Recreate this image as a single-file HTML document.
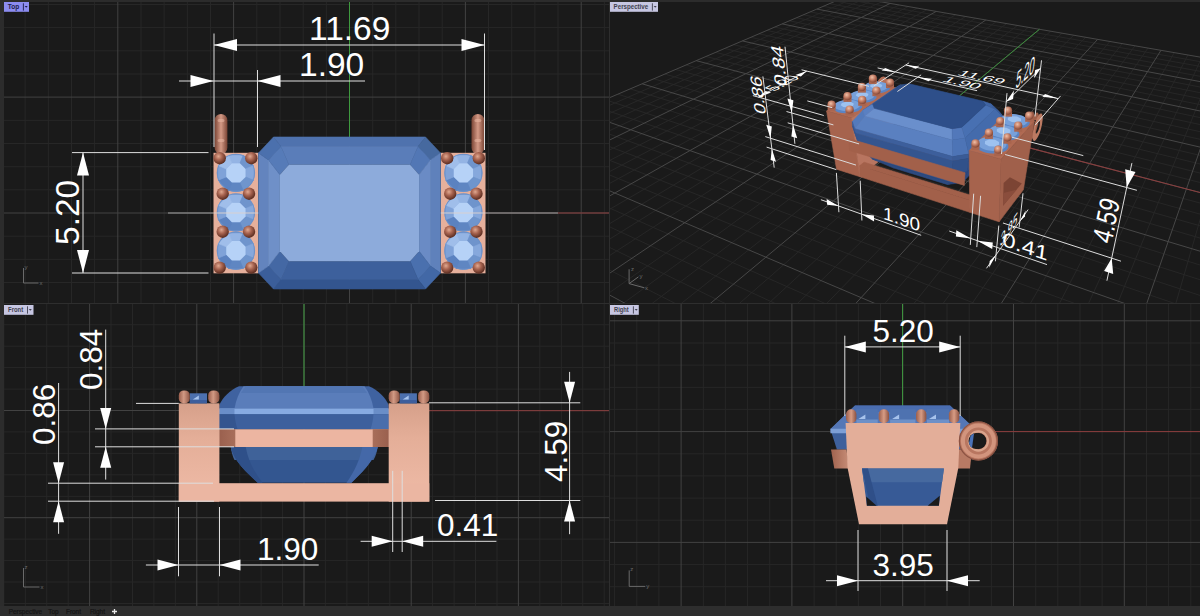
<!DOCTYPE html>
<html><head><meta charset="utf-8"><style>html,body{margin:0;padding:0;background:#2c2c2c;overflow:hidden;width:1200px;height:616px}svg{display:block}</style></head>
<body><svg width="1200" height="616" viewBox="0 0 1200 616"><defs><clipPath id="c_top"><rect x="4" y="2" width="605" height="301"/></clipPath><clipPath id="c_persp"><rect x="610" y="2" width="590" height="301"/></clipPath><clipPath id="c_front"><rect x="4" y="304" width="605" height="302"/></clipPath><clipPath id="c_right"><rect x="610" y="304" width="590" height="302"/></clipPath></defs>
<rect x="0" y="0" width="1200" height="616" fill="#2c2c2c"/>
<rect x="4" y="2" width="605" height="301" fill="#1a1a1a"/>
<rect x="610" y="2" width="590" height="301" fill="#1a1a1a"/>
<rect x="4" y="304" width="605" height="302" fill="#1a1a1a"/>
<rect x="610" y="304" width="590" height="302" fill="#1a1a1a"/>
<g clip-path="url(#c_top)"><path d="M25.1 2V303M48.3 2V303M71.5 2V303M94.6 2V303M141 2V303M4 4.5H609M164.1 2V303M4 27.6H609M187.3 2V303M4 50.8H609M210.5 2V303M4 74H609M256.8 2V303M4 120.3H609M280 2V303M4 143.5H609M303.2 2V303M4 166.7H609M326.3 2V303M4 189.8H609M372.7 2V303M4 236.2H609M395.8 2V303M4 259.3H609M419 2V303M4 282.5H609M442.2 2V303M488.5 2V303M511.7 2V303M534.9 2V303M558 2V303M604.4 2V303" stroke="#272727" stroke-width="1" fill="none"/><path d="M117.8 2V303M233.6 2V303M4 97.1H609M349.5 2V303M4 213H609M465.4 2V303M581.2 2V303" stroke="#424242" stroke-width="1" fill="none"/></g>
<g clip-path="url(#c_front)"><path d="M3.8 304V606M25.3 304V606M46.7 304V606M68.2 304V606M111 304V606M132.5 304V606M153.9 304V606M175.4 304V606M218.2 304V606M4 324.7H609M239.7 304V606M4 346.2H609M261.1 304V606M4 367.6H609M282.6 304V606M4 389.1H609M325.4 304V606M4 431.9H609M346.9 304V606M4 453.4H609M368.3 304V606M4 474.8H609M389.8 304V606M4 496.3H609M432.6 304V606M4 539.1H609M454.1 304V606M4 560.6H609M475.5 304V606M4 582H609M497 304V606M4 603.5H609M539.8 304V606M561.3 304V606M582.7 304V606M604.2 304V606" stroke="#272727" stroke-width="1" fill="none"/><path d="M89.6 304V606M196.8 304V606M4 303.3H609M304 304V606M4 410.5H609M411.2 304V606M4 517.7H609M518.4 304V606" stroke="#424242" stroke-width="1" fill="none"/></g>
<g clip-path="url(#c_right)"><path d="M614.6 304V606M636.8 304V606M658.9 304V606M703.3 304V606M725.4 304V606M747.6 304V606M769.7 304V606M814.1 304V606M610 343H1200M836.2 304V606M610 365.1H1200M858.4 304V606M610 387.3H1200M880.5 304V606M610 409.4H1200M924.9 304V606M610 453.8H1200M947 304V606M610 475.9H1200M969.2 304V606M610 498.1H1200M991.3 304V606M610 520.2H1200M1035.7 304V606M610 564.6H1200M1057.8 304V606M610 586.7H1200M1080 304V606M1102.1 304V606M1146.5 304V606M1168.6 304V606M1190.8 304V606" stroke="#272727" stroke-width="1" fill="none"/><path d="M681.1 304V606M791.9 304V606M610 320.8H1200M902.7 304V606M610 431.6H1200M1013.5 304V606M610 542.4H1200M1124.3 304V606" stroke="#424242" stroke-width="1" fill="none"/></g>
<g clip-path="url(#c_persp)"><path d="M414.8 190.7L855.7 -2.5M425.6 176.4L1273.3 607.9M425.1 196.3L864.1 -1.1M445.5 167.9L1275.7 570.4M435.7 202L872.7 0.4M464.6 159.7L1277.8 536.2M446.7 207.8L881.4 1.9M482.8 151.9L1279.7 504.9M469.5 220.1L899.1 5M517.1 137.3L1283.1 449.5M481.5 226.5L908.2 6.6M533.3 130.4L1284.7 424.9M493.8 233.1L917.4 8.1M548.7 123.7L1286.1 402.1M506.5 239.9L926.7 9.8M563.6 117.4L1287.4 380.9M533 254.1L945.8 13.1M591.8 105.3L1289.8 342.6M547 261.5L955.5 14.8M605.1 99.7L1290.8 325.3M561.4 269.3L965.5 16.5M617.9 94.2L1291.8 309M576.2 277.2L975.5 18.2M630.3 88.9L1292.8 293.7M607.5 294L996.1 21.8M653.8 78.8L1294.5 265.6M624 302.8L1006.7 23.6M664.9 74.1L1295.3 252.8M641 311.9L1017.4 25.5M675.7 69.5L1296.1 240.6M658.7 321.4L1028.3 27.4M686.2 65L1296.8 229M696 341.4L1050.7 31.2M706.1 56.5L1298.1 207.5M715.8 352L1062.1 33.2M715.6 52.4L1298.7 197.6M736.3 363L1073.7 35.2M724.8 48.5L1299.3 188.1M757.7 374.4L1085.6 37.3M733.7 44.7L1299.9 179.1M803.1 398.7L1109.9 41.5M750.8 37.3L1300.9 162.2M827.2 411.6L1122.3 43.6M759 33.8L1301.4 154.2M852.4 425.1L1135 45.8M766.9 30.4L1301.9 146.7M878.7 439.2L1147.9 48.1M774.7 27.1L1302.3 139.4M935.1 469.4L1174.3 52.6M789.5 20.8L1303.2 125.7M965.2 485.6L1187.9 55M796.6 17.8L1303.6 119.3M996.9 502.5L1201.8 57.4M803.5 14.8L1304 113.1M1030.1 520.3L1215.9 59.8M810.3 11.9L1304.3 107.1M1101.9 558.8L1244.9 64.9M823.3 6.3L1305 95.8M1140.7 579.5L1259.8 67.4M829.5 3.7L1305.4 90.5M1181.6 601.5L1275 70.1M835.6 1.1L1305.7 85.3M1224.9 624.7L1290.5 72.8M841.6 -1.5L1306 80.3" stroke="#282828" stroke-width="0.9" fill="none"/><path d="M404.7 185.3L847.4 -4M404.7 185.3L1270.8 649.2M457.9 213.9L890.2 3.4M500.3 144.4L1281.5 476.1M519.5 246.9L936.2 11.4M578 111.2L1288.6 361.1M591.6 285.4L985.8 20M642.2 83.8L1293.7 279.3M677 331.2L1039.4 29.3M696.3 60.7L1297.5 218M779.9 386.3L1097.6 39.4M742.4 40.9L1300.4 170.4M906.3 454L1161 50.3M782.2 23.9L1302.8 132.4M1065.1 539.1L1230.3 62.3M816.9 9.1L1304.7 101.4M1270.8 649.2L1306.3 75.5M847.4 -4L1306.3 75.5" stroke="#474747" stroke-width="1" fill="none"/></g>
<defs><radialGradient id="prong" cx="0.4" cy="0.35" r="0.65"><stop offset="0" stop-color="#e0a890"/><stop offset="0.45" stop-color="#a86450"/><stop offset="1" stop-color="#5a2c20"/></radialGradient><radialGradient id="prongP" cx="0.4" cy="0.35" r="0.7"><stop offset="0" stop-color="#f0c0a8"/><stop offset="0.5" stop-color="#c27c64"/><stop offset="1" stop-color="#7a4030"/></radialGradient><linearGradient id="loopv" x1="0" y1="0" x2="1" y2="0"><stop offset="0" stop-color="#7a4434"/><stop offset="0.5" stop-color="#d49a86"/><stop offset="1" stop-color="#7a4434"/></linearGradient></defs>
<g clip-path="url(#c_top)">
<line x1="349.5" y1="2" x2="349.5" y2="140" stroke="#3f9a3f" stroke-width="1"/>
<line x1="485" y1="213" x2="558" y2="213" stroke="#aaa2a2" stroke-width="1"/>
<line x1="558" y1="213" x2="609" y2="213" stroke="#8a3c3c" stroke-width="1"/>
<line x1="168" y1="213" x2="214" y2="213" stroke="#a0a0a0" stroke-width="1"/>
<rect x="214.6" y="114" width="12.8" height="40" rx="6.4" ry="6.4" fill="url(#loopv)"/>
<rect x="217.6" y="119" width="6.8" height="3" rx="1.5" fill="#e6b4a0" opacity="0.6"/>
<rect x="217.6" y="139" width="6.8" height="3" rx="1.5" fill="#e6b4a0" opacity="0.6"/>
<rect x="471.5" y="114" width="12.8" height="40" rx="6.4" ry="6.4" fill="url(#loopv)"/>
<rect x="474.5" y="119" width="6.8" height="3" rx="1.5" fill="#e6b4a0" opacity="0.6"/>
<rect x="474.5" y="139" width="6.8" height="3" rx="1.5" fill="#e6b4a0" opacity="0.6"/>
<rect x="213.5" y="152.8" width="44.5" height="120.5" fill="#e6b09c"/>
<circle cx="235.9" cy="172.9" r="19" fill="#6f95cd"/>
<polygon points="228.6,155.3 243.2,155.3 239.9,163.2 231.9,163.2" fill="#94b4e4" stroke="#94b4e4" stroke-width="0.6" stroke-linejoin="round" />
<polygon points="243.2,155.3 253.5,165.6 245.6,168.9 239.9,163.2" fill="#6f94cc" stroke="#6f94cc" stroke-width="0.6" stroke-linejoin="round" />
<polygon points="253.5,165.6 253.5,180.2 245.6,176.9 245.6,168.9" fill="#86a8dc" stroke="#86a8dc" stroke-width="0.6" stroke-linejoin="round" />
<polygon points="253.5,180.2 243.2,190.5 239.9,182.6 245.6,176.9" fill="#6f95cd" stroke="#6f95cd" stroke-width="0.6" stroke-linejoin="round" />
<polygon points="243.2,190.5 228.6,190.5 231.9,182.6 239.9,182.6" fill="#5f86c2" stroke="#5f86c2" stroke-width="0.6" stroke-linejoin="round" />
<polygon points="228.6,190.5 218.3,180.2 226.2,176.9 231.9,182.6" fill="#5b82c0" stroke="#5b82c0" stroke-width="0.6" stroke-linejoin="round" />
<polygon points="218.3,180.2 218.3,165.6 226.2,168.9 226.2,176.9" fill="#7fa2d8" stroke="#7fa2d8" stroke-width="0.6" stroke-linejoin="round" />
<polygon points="218.3,165.6 228.6,155.3 231.9,163.2 226.2,168.9" fill="#a0beea" stroke="#a0beea" stroke-width="0.6" stroke-linejoin="round" />
<circle cx="235.9" cy="172.9" r="18.7" fill="none" stroke="#6a8fc8" stroke-width="0.8"/>
<polygon points="245.6,176.9 239.9,182.6 231.9,182.6 226.2,176.9 226.2,168.9 231.9,163.2 239.9,163.2 245.6,168.9" fill="#b6d2f7" />
<circle cx="235.9" cy="212.5" r="19" fill="#6f95cd"/>
<polygon points="228.6,194.9 243.2,194.9 239.9,202.8 231.9,202.8" fill="#94b4e4" stroke="#94b4e4" stroke-width="0.6" stroke-linejoin="round" />
<polygon points="243.2,194.9 253.5,205.2 245.6,208.5 239.9,202.8" fill="#6f94cc" stroke="#6f94cc" stroke-width="0.6" stroke-linejoin="round" />
<polygon points="253.5,205.2 253.5,219.8 245.6,216.5 245.6,208.5" fill="#86a8dc" stroke="#86a8dc" stroke-width="0.6" stroke-linejoin="round" />
<polygon points="253.5,219.8 243.2,230.1 239.9,222.2 245.6,216.5" fill="#6f95cd" stroke="#6f95cd" stroke-width="0.6" stroke-linejoin="round" />
<polygon points="243.2,230.1 228.6,230.1 231.9,222.2 239.9,222.2" fill="#5f86c2" stroke="#5f86c2" stroke-width="0.6" stroke-linejoin="round" />
<polygon points="228.6,230.1 218.3,219.8 226.2,216.5 231.9,222.2" fill="#5b82c0" stroke="#5b82c0" stroke-width="0.6" stroke-linejoin="round" />
<polygon points="218.3,219.8 218.3,205.2 226.2,208.5 226.2,216.5" fill="#7fa2d8" stroke="#7fa2d8" stroke-width="0.6" stroke-linejoin="round" />
<polygon points="218.3,205.2 228.6,194.9 231.9,202.8 226.2,208.5" fill="#a0beea" stroke="#a0beea" stroke-width="0.6" stroke-linejoin="round" />
<circle cx="235.9" cy="212.5" r="18.7" fill="none" stroke="#6a8fc8" stroke-width="0.8"/>
<polygon points="245.6,216.5 239.9,222.2 231.9,222.2 226.2,216.5 226.2,208.5 231.9,202.8 239.9,202.8 245.6,208.5" fill="#b6d2f7" />
<circle cx="235.9" cy="250.8" r="19" fill="#6f95cd"/>
<polygon points="228.6,233.2 243.2,233.2 239.9,241.1 231.9,241.1" fill="#94b4e4" stroke="#94b4e4" stroke-width="0.6" stroke-linejoin="round" />
<polygon points="243.2,233.2 253.5,243.5 245.6,246.8 239.9,241.1" fill="#6f94cc" stroke="#6f94cc" stroke-width="0.6" stroke-linejoin="round" />
<polygon points="253.5,243.5 253.5,258.1 245.6,254.8 245.6,246.8" fill="#86a8dc" stroke="#86a8dc" stroke-width="0.6" stroke-linejoin="round" />
<polygon points="253.5,258.1 243.2,268.4 239.9,260.5 245.6,254.8" fill="#6f95cd" stroke="#6f95cd" stroke-width="0.6" stroke-linejoin="round" />
<polygon points="243.2,268.4 228.6,268.4 231.9,260.5 239.9,260.5" fill="#5f86c2" stroke="#5f86c2" stroke-width="0.6" stroke-linejoin="round" />
<polygon points="228.6,268.4 218.3,258.1 226.2,254.8 231.9,260.5" fill="#5b82c0" stroke="#5b82c0" stroke-width="0.6" stroke-linejoin="round" />
<polygon points="218.3,258.1 218.3,243.5 226.2,246.8 226.2,254.8" fill="#7fa2d8" stroke="#7fa2d8" stroke-width="0.6" stroke-linejoin="round" />
<polygon points="218.3,243.5 228.6,233.2 231.9,241.1 226.2,246.8" fill="#a0beea" stroke="#a0beea" stroke-width="0.6" stroke-linejoin="round" />
<circle cx="235.9" cy="250.8" r="18.7" fill="none" stroke="#6a8fc8" stroke-width="0.8"/>
<polygon points="245.6,254.8 239.9,260.5 231.9,260.5 226.2,254.8 226.2,246.8 231.9,241.1 239.9,241.1 245.6,246.8" fill="#b6d2f7" />
<circle cx="219.7" cy="158.2" r="6.2" fill="url(#prong)"/>
<circle cx="251.3" cy="158.2" r="6.2" fill="url(#prong)"/>
<circle cx="219.7" cy="267.6" r="6.2" fill="url(#prong)"/>
<circle cx="251.3" cy="267.6" r="6.2" fill="url(#prong)"/>
<circle cx="222.7" cy="193.7" r="6.2" fill="url(#prong)"/>
<circle cx="249" cy="193.7" r="6.2" fill="url(#prong)"/>
<circle cx="222.7" cy="231.7" r="6.2" fill="url(#prong)"/>
<circle cx="249" cy="231.7" r="6.2" fill="url(#prong)"/>
<rect x="441" y="152.8" width="44.5" height="120.5" fill="#e6b09c"/>
<circle cx="463.4" cy="172.9" r="19" fill="#6f95cd"/>
<polygon points="456.1,155.3 470.7,155.3 467.4,163.2 459.4,163.2" fill="#94b4e4" stroke="#94b4e4" stroke-width="0.6" stroke-linejoin="round" />
<polygon points="470.7,155.3 481,165.6 473.1,168.9 467.4,163.2" fill="#6f94cc" stroke="#6f94cc" stroke-width="0.6" stroke-linejoin="round" />
<polygon points="481,165.6 481,180.2 473.1,176.9 473.1,168.9" fill="#86a8dc" stroke="#86a8dc" stroke-width="0.6" stroke-linejoin="round" />
<polygon points="481,180.2 470.7,190.5 467.4,182.6 473.1,176.9" fill="#6f95cd" stroke="#6f95cd" stroke-width="0.6" stroke-linejoin="round" />
<polygon points="470.7,190.5 456.1,190.5 459.4,182.6 467.4,182.6" fill="#5f86c2" stroke="#5f86c2" stroke-width="0.6" stroke-linejoin="round" />
<polygon points="456.1,190.5 445.8,180.2 453.7,176.9 459.4,182.6" fill="#5b82c0" stroke="#5b82c0" stroke-width="0.6" stroke-linejoin="round" />
<polygon points="445.8,180.2 445.8,165.6 453.7,168.9 453.7,176.9" fill="#7fa2d8" stroke="#7fa2d8" stroke-width="0.6" stroke-linejoin="round" />
<polygon points="445.8,165.6 456.1,155.3 459.4,163.2 453.7,168.9" fill="#a0beea" stroke="#a0beea" stroke-width="0.6" stroke-linejoin="round" />
<circle cx="463.4" cy="172.9" r="18.7" fill="none" stroke="#6a8fc8" stroke-width="0.8"/>
<polygon points="473.1,176.9 467.4,182.6 459.4,182.6 453.7,176.9 453.7,168.9 459.4,163.2 467.4,163.2 473.1,168.9" fill="#b6d2f7" />
<circle cx="463.4" cy="212.5" r="19" fill="#6f95cd"/>
<polygon points="456.1,194.9 470.7,194.9 467.4,202.8 459.4,202.8" fill="#94b4e4" stroke="#94b4e4" stroke-width="0.6" stroke-linejoin="round" />
<polygon points="470.7,194.9 481,205.2 473.1,208.5 467.4,202.8" fill="#6f94cc" stroke="#6f94cc" stroke-width="0.6" stroke-linejoin="round" />
<polygon points="481,205.2 481,219.8 473.1,216.5 473.1,208.5" fill="#86a8dc" stroke="#86a8dc" stroke-width="0.6" stroke-linejoin="round" />
<polygon points="481,219.8 470.7,230.1 467.4,222.2 473.1,216.5" fill="#6f95cd" stroke="#6f95cd" stroke-width="0.6" stroke-linejoin="round" />
<polygon points="470.7,230.1 456.1,230.1 459.4,222.2 467.4,222.2" fill="#5f86c2" stroke="#5f86c2" stroke-width="0.6" stroke-linejoin="round" />
<polygon points="456.1,230.1 445.8,219.8 453.7,216.5 459.4,222.2" fill="#5b82c0" stroke="#5b82c0" stroke-width="0.6" stroke-linejoin="round" />
<polygon points="445.8,219.8 445.8,205.2 453.7,208.5 453.7,216.5" fill="#7fa2d8" stroke="#7fa2d8" stroke-width="0.6" stroke-linejoin="round" />
<polygon points="445.8,205.2 456.1,194.9 459.4,202.8 453.7,208.5" fill="#a0beea" stroke="#a0beea" stroke-width="0.6" stroke-linejoin="round" />
<circle cx="463.4" cy="212.5" r="18.7" fill="none" stroke="#6a8fc8" stroke-width="0.8"/>
<polygon points="473.1,216.5 467.4,222.2 459.4,222.2 453.7,216.5 453.7,208.5 459.4,202.8 467.4,202.8 473.1,208.5" fill="#b6d2f7" />
<circle cx="463.4" cy="250.8" r="19" fill="#6f95cd"/>
<polygon points="456.1,233.2 470.7,233.2 467.4,241.1 459.4,241.1" fill="#94b4e4" stroke="#94b4e4" stroke-width="0.6" stroke-linejoin="round" />
<polygon points="470.7,233.2 481,243.5 473.1,246.8 467.4,241.1" fill="#6f94cc" stroke="#6f94cc" stroke-width="0.6" stroke-linejoin="round" />
<polygon points="481,243.5 481,258.1 473.1,254.8 473.1,246.8" fill="#86a8dc" stroke="#86a8dc" stroke-width="0.6" stroke-linejoin="round" />
<polygon points="481,258.1 470.7,268.4 467.4,260.5 473.1,254.8" fill="#6f95cd" stroke="#6f95cd" stroke-width="0.6" stroke-linejoin="round" />
<polygon points="470.7,268.4 456.1,268.4 459.4,260.5 467.4,260.5" fill="#5f86c2" stroke="#5f86c2" stroke-width="0.6" stroke-linejoin="round" />
<polygon points="456.1,268.4 445.8,258.1 453.7,254.8 459.4,260.5" fill="#5b82c0" stroke="#5b82c0" stroke-width="0.6" stroke-linejoin="round" />
<polygon points="445.8,258.1 445.8,243.5 453.7,246.8 453.7,254.8" fill="#7fa2d8" stroke="#7fa2d8" stroke-width="0.6" stroke-linejoin="round" />
<polygon points="445.8,243.5 456.1,233.2 459.4,241.1 453.7,246.8" fill="#a0beea" stroke="#a0beea" stroke-width="0.6" stroke-linejoin="round" />
<circle cx="463.4" cy="250.8" r="18.7" fill="none" stroke="#6a8fc8" stroke-width="0.8"/>
<polygon points="473.1,254.8 467.4,260.5 459.4,260.5 453.7,254.8 453.7,246.8 459.4,241.1 467.4,241.1 473.1,246.8" fill="#b6d2f7" />
<circle cx="447.2" cy="158.2" r="6.2" fill="url(#prong)"/>
<circle cx="478.8" cy="158.2" r="6.2" fill="url(#prong)"/>
<circle cx="447.2" cy="267.6" r="6.2" fill="url(#prong)"/>
<circle cx="478.8" cy="267.6" r="6.2" fill="url(#prong)"/>
<circle cx="450.2" cy="193.7" r="6.2" fill="url(#prong)"/>
<circle cx="476.5" cy="193.7" r="6.2" fill="url(#prong)"/>
<circle cx="450.2" cy="231.7" r="6.2" fill="url(#prong)"/>
<circle cx="476.5" cy="231.7" r="6.2" fill="url(#prong)"/>
<line x1="214" y1="213" x2="258.5" y2="213" stroke="#d8d0d0" stroke-width="1"/>
<line x1="440.5" y1="213" x2="485" y2="213" stroke="#d8d0d0" stroke-width="1"/>
<polygon points="273.5,137 425.5,137 418,146.5 281,146.5" fill="#4f72ae" stroke="#4f72ae" stroke-width="0.6" stroke-linejoin="round" />
<polygon points="281,146.5 418,146.5 410.1,164.8 288.9,164.8" fill="#5a7db9" stroke="#5a7db9" stroke-width="0.6" stroke-linejoin="round" />
<polygon points="425.5,137 440.5,153 430.5,160 418,146.5" fill="#46699f" stroke="#46699f" stroke-width="0.6" stroke-linejoin="round" />
<polygon points="418,146.5 430.5,160 419.1,174.8 410.1,164.8" fill="#5277b5" stroke="#5277b5" stroke-width="0.6" stroke-linejoin="round" />
<polygon points="440.5,153 440.5,273 430.5,266 430.5,160" fill="#5f81bb" stroke="#5f81bb" stroke-width="0.6" stroke-linejoin="round" />
<polygon points="430.5,160 430.5,266 419.1,251.2 419.1,174.8" fill="#6a8bc5" stroke="#6a8bc5" stroke-width="0.6" stroke-linejoin="round" />
<polygon points="440.5,273 425.5,289 418,279.5 430.5,266" fill="#4268a6" stroke="#4268a6" stroke-width="0.6" stroke-linejoin="round" />
<polygon points="430.5,266 418,279.5 410.1,261.2 419.1,251.2" fill="#4a70ae" stroke="#4a70ae" stroke-width="0.6" stroke-linejoin="round" />
<polygon points="425.5,289 273.5,289 281,279.5 418,279.5" fill="#33558f" stroke="#33558f" stroke-width="0.6" stroke-linejoin="round" />
<polygon points="418,279.5 281,279.5 288.9,261.2 410.1,261.2" fill="#3d609c" stroke="#3d609c" stroke-width="0.6" stroke-linejoin="round" />
<polygon points="273.5,289 258.5,273 268.5,266 281,279.5" fill="#3b5e9a" stroke="#3b5e9a" stroke-width="0.6" stroke-linejoin="round" />
<polygon points="281,279.5 268.5,266 279.9,251.2 288.9,261.2" fill="#4468a4" stroke="#4468a4" stroke-width="0.6" stroke-linejoin="round" />
<polygon points="258.5,273 258.5,153 268.5,160 268.5,266" fill="#6384be" stroke="#6384be" stroke-width="0.6" stroke-linejoin="round" />
<polygon points="268.5,266 268.5,160 279.9,174.8 279.9,251.2" fill="#6f90c8" stroke="#6f90c8" stroke-width="0.6" stroke-linejoin="round" />
<polygon points="258.5,153 273.5,137 281,146.5 268.5,160" fill="#4b70ad" stroke="#4b70ad" stroke-width="0.6" stroke-linejoin="round" />
<polygon points="268.5,160 281,146.5 288.9,164.8 279.9,174.8" fill="#567bb8" stroke="#567bb8" stroke-width="0.6" stroke-linejoin="round" />
<polygon points="288.9,164.8 410.1,164.8 419.1,174.8 419.1,251.2 410.1,261.2 288.9,261.2 279.9,251.2 279.9,174.8" fill="#8dabdb" />
</g>
<line x1="214" y1="33.5" x2="214" y2="147" stroke="#dedede" stroke-width="1"/>
<line x1="484.5" y1="33.5" x2="484.5" y2="150" stroke="#dedede" stroke-width="1"/>
<line x1="214" y1="45" x2="484.5" y2="45" stroke="#e0e0e0" stroke-width="1"/>
<polygon points="214,45 237,39 237,51" fill="#ffffff" />
<polygon points="484.5,45 461.5,51 461.5,39" fill="#ffffff" />
<text x="309" y="39.5" font-family="Liberation Sans" font-size="33.5" fill="#ffffff" text-anchor="start">11.69</text>
<line x1="257.5" y1="70" x2="257.5" y2="147" stroke="#dedede" stroke-width="1"/>
<line x1="179" y1="81" x2="365" y2="81" stroke="#e0e0e0" stroke-width="1"/>
<polygon points="213.5,81 190.5,87 190.5,75" fill="#ffffff" />
<polygon points="257.5,81 280.5,75 280.5,87" fill="#ffffff" />
<text x="299" y="76.3" font-family="Liberation Sans" font-size="33.5" fill="#ffffff" text-anchor="start">1.90</text>
<line x1="72" y1="152.6" x2="208.5" y2="152.6" stroke="#dedede" stroke-width="1"/>
<line x1="72" y1="273" x2="208.5" y2="273" stroke="#dedede" stroke-width="1"/>
<line x1="83" y1="152.6" x2="83" y2="273" stroke="#e0e0e0" stroke-width="1"/>
<polygon points="83,152.6 89,175.6 77,175.6" fill="#ffffff" />
<polygon points="83,273 77,250 89,250" fill="#ffffff" />
<text x="78.5" y="245" font-family="Liberation Sans" font-size="33.5" fill="#ffffff" text-anchor="start" transform="rotate(-90 78.5 245)">5.20</text>
<defs><linearGradient id="pillar" x1="0" y1="0" x2="0" y2="1"><stop offset="0" stop-color="#d6a08a"/><stop offset="0.35" stop-color="#e4ae98"/><stop offset="1" stop-color="#efbba7"/></linearGradient><linearGradient id="cyl" x1="0" y1="0" x2="1" y2="0"><stop offset="0" stop-color="#9a5e4c"/><stop offset="0.45" stop-color="#d29a84"/><stop offset="1" stop-color="#8c5444"/></linearGradient><linearGradient id="bandend" x1="0" y1="0" x2="1" y2="0"><stop offset="0" stop-color="#9a604e"/><stop offset="1" stop-color="#a86e5a"/></linearGradient></defs>
<g clip-path="url(#c_front)">
<line x1="304" y1="304" x2="304" y2="390" stroke="#3f9a3f" stroke-width="1"/>
<line x1="429" y1="410.7" x2="609" y2="410.7" stroke="#8a3c3c" stroke-width="1"/>
<path d="M239 386.2L369 386.2C378 390 386 398 388.7 405L388.7 429.2L219.3 429.2L219.3 405C222 398 230 390 239 386.2Z" fill="#3f62a0"/>
<path d="M243.5 386.2L364.5 386.2C369 392 372 400 373.5 408.6L234.5 408.6C236 400 239 392 243.5 386.2Z" fill="#5a7dba"/>
<path d="M246 386.2L362 386.2C364 388.5 365.5 390.5 367 393L241 393C242.5 390.5 244 388.5 246 386.2Z" fill="#5276b3"/>
<polygon points="219.3,408.6 388.7,408.6 388.7,414.2 219.3,414.2" fill="#87abe2" />
<polygon points="219.3,408.6 234.5,408.6 234.5,414.2 219.3,414.2" fill="#6a8ec8" />
<polygon points="388.7,408.6 373.5,408.6 373.5,414.2 388.7,414.2" fill="#6a8ec8" />
<polygon points="219.3,414.2 388.7,414.2 388.7,429.2 219.3,429.2" fill="#3d609d" />
<path d="M219.3 414.2L234.5 414.2C235 420 236 425 237.5 429.2L219.3 429.2Z" fill="#34558f"/>
<path d="M388.7 414.2L373.5 414.2C373 420 372 425 370.5 429.2L388.7 429.2Z" fill="#4a6eac"/>
<path d="M230.75 447C233 457 240 467 257.7 482.7L351.5 482.7C368 467 375 457 377.75 447Z" fill="#335690"/>
<path d="M230.75 447L377.75 447C377 452 375.5 456.5 373.5 460L234.5 460C232.5 456.5 231.5 452 230.75 447Z" fill="#3f6299"/>
<path d="M230.75 447L245.7 447C248 460 254 472 262.5 482.7L257.7 482.7C240 467 233 457 230.75 447Z" fill="#2f5089"/>
<path d="M377.75 447L362.3 447C360 460 354 472 346.5 482.7L351.5 482.7C368 467 375 457 377.75 447Z" fill="#4468a8"/>
<polygon points="219.3,429.2 388.7,429.2 388.7,447 219.3,447" fill="#ecb5a1" />
<rect x="219.3" y="429.2" width="16" height="17.8" fill="url(#bandend)"/>
<rect x="372.7" y="429.2" width="16" height="17.8" fill="url(#bandend)" transform="translate(761.4 0) scale(-1 1)"/>
<rect x="178.8" y="403.3" width="40.6" height="98.3" fill="url(#pillar)"/>
<rect x="388.7" y="403.3" width="40.6" height="98.3" fill="url(#pillar)"/>
<rect x="178.8" y="483.2" width="250.5" height="18.4" fill="#ebb6a2"/>
<rect x="189.8" y="393.3" width="17.2" height="10" fill="#4c70ae"/>
<polygon points="189.8,400 207,400 207,403.3 189.8,403.3" fill="#3d5e9c" />
<polygon points="192.8,399.5 198.8,395.5 198.8,399.5" fill="#a8c4ee" />
<rect x="178.8" y="390.4" width="11" height="13" rx="5" fill="url(#cyl)"/>
<rect x="208.20000000000002" y="390.4" width="11.2" height="13" rx="5" fill="url(#cyl)"/>
<rect x="399.7" y="393.3" width="17.2" height="10" fill="#4c70ae"/>
<polygon points="399.7,400 416.9,400 416.9,403.3 399.7,403.3" fill="#3d5e9c" />
<polygon points="402.7,399.5 408.7,395.5 408.7,399.5" fill="#a8c4ee" />
<rect x="388.7" y="390.4" width="11" height="13" rx="5" fill="url(#cyl)"/>
<rect x="418.09999999999997" y="390.4" width="11.2" height="13" rx="5" fill="url(#cyl)"/>
</g>
<line x1="136" y1="403.4" x2="178.8" y2="403.4" stroke="#dedede" stroke-width="1"/>
<line x1="95" y1="428.9" x2="234" y2="428.9" stroke="#dedede" stroke-width="1"/>
<line x1="95" y1="446.8" x2="234" y2="446.8" stroke="#dedede" stroke-width="1"/>
<line x1="105.7" y1="329.6" x2="105.7" y2="479.6" stroke="#e0e0e0" stroke-width="1"/>
<polygon points="105.7,428.9 100.2,407.9 111.2,407.9" fill="#ffffff" />
<polygon points="105.7,446.8 111.2,467.8 100.2,467.8" fill="#ffffff" />
<text x="101.5" y="390" font-family="Liberation Sans" font-size="31.5" fill="#ffffff" text-anchor="start" transform="rotate(-90 101.5 390)">0.84</text>
<line x1="48" y1="483.2" x2="213" y2="483.2" stroke="#dedede" stroke-width="1"/>
<line x1="48" y1="501.2" x2="214" y2="501.2" stroke="#dedede" stroke-width="1"/>
<line x1="58.6" y1="383" x2="58.6" y2="533.8" stroke="#e0e0e0" stroke-width="1"/>
<polygon points="58.6,483.2 53.1,462.2 64.1,462.2" fill="#ffffff" />
<polygon points="58.6,501.2 64.1,522.2 53.1,522.2" fill="#ffffff" />
<text x="55" y="445" font-family="Liberation Sans" font-size="31.5" fill="#ffffff" text-anchor="start" transform="rotate(-90 55 445)">0.86</text>
<line x1="429" y1="402.8" x2="580.3" y2="402.8" stroke="#dedede" stroke-width="1"/>
<line x1="435" y1="500.5" x2="580.3" y2="500.5" stroke="#dedede" stroke-width="1"/>
<line x1="569.6" y1="371.9" x2="569.6" y2="534.2" stroke="#e0e0e0" stroke-width="1"/>
<polygon points="569.6,402.8 564.1,381.8 575.1,381.8" fill="#ffffff" />
<polygon points="569.6,500.5 575.1,521.5 564.1,521.5" fill="#ffffff" />
<text x="566.5" y="482" font-family="Liberation Sans" font-size="31.5" fill="#ffffff" text-anchor="start" transform="rotate(-90 566.5 482)">4.59</text>
<line x1="392.7" y1="470.8" x2="392.7" y2="552" stroke="#dedede" stroke-width="1"/>
<line x1="402.2" y1="470.8" x2="402.2" y2="552" stroke="#dedede" stroke-width="1"/>
<line x1="360.6" y1="541.3" x2="496.4" y2="541.3" stroke="#e0e0e0" stroke-width="1"/>
<polygon points="392.7,541.3 371.7,546.8 371.7,535.8" fill="#ffffff" />
<polygon points="402.2,541.3 423.2,535.8 423.2,546.8" fill="#ffffff" />
<text x="437" y="535.6" font-family="Liberation Sans" font-size="31.5" fill="#ffffff" text-anchor="start">0.41</text>
<line x1="178.5" y1="507" x2="178.5" y2="576.3" stroke="#dedede" stroke-width="1"/>
<line x1="219.5" y1="507" x2="219.5" y2="576.3" stroke="#dedede" stroke-width="1"/>
<line x1="145.9" y1="565" x2="318.7" y2="565" stroke="#e0e0e0" stroke-width="1"/>
<polygon points="178.5,565 157.5,570.5 157.5,559.5" fill="#ffffff" />
<polygon points="219.5,565 240.5,559.5 240.5,570.5" fill="#ffffff" />
<text x="257" y="559.5" font-family="Liberation Sans" font-size="31.5" fill="#ffffff" text-anchor="start">1.90</text>
<defs><linearGradient id="railL" x1="0" y1="0" x2="1" y2="0"><stop offset="0" stop-color="#a0624e"/><stop offset="1" stop-color="#c88e78"/></linearGradient><radialGradient id="ring" cx="0.4" cy="0.35" r="0.7"><stop offset="0" stop-color="#f0c0a8"/><stop offset="0.55" stop-color="#c07a62"/><stop offset="1" stop-color="#6e3a2c"/></radialGradient><linearGradient id="cylR" x1="0" y1="0" x2="1" y2="0"><stop offset="0" stop-color="#9a5e4c"/><stop offset="0.5" stop-color="#d89c84"/><stop offset="1" stop-color="#8a5040"/></linearGradient></defs>
<g clip-path="url(#c_right)">
<line x1="902.6" y1="304" x2="902.6" y2="406" stroke="#3f9a3f" stroke-width="1"/>
<line x1="994" y1="431.6" x2="1200" y2="431.6" stroke="#8a3c3c" stroke-width="1"/>
<polygon points="855,405.4 950,405.4 975,429 969,449.5 836.9,449.5 830.4,429.2" fill="#3e609c" />
<polygon points="855,405.4 950,405.4 957,412 848,412" fill="#4a6db0" />
<polygon points="848,412 957,412 975,429 830.4,429" fill="#5577b6" />
<polygon points="830.4,428.8 975,428.8 975,433.3 830.4,433.3" fill="#7d9fd6" />
<polygon points="831,449.5 846.5,449.5 849,468.4 834.3,468.4" fill="url(#railL)" />
<polygon points="958,449.5 972,449.5 970,468.4 955,468.4" fill="#b87a64" />
<rect x="856.4" y="409" width="21.399999999999977" height="14" fill="#4e72b0"/>
<polygon points="858.4,419 865.4,414.5 865.4,419" fill="#a6c2ec" />
<polygon points="856.4,419.5 877.8,419.5 877.8,423 856.4,423" fill="#6d90c8" />
<rect x="890.1" y="409" width="25.399999999999977" height="14" fill="#4e72b0"/>
<polygon points="892.1,419 899.1,414.5 899.1,419" fill="#a6c2ec" />
<polygon points="890.1,419.5 915.5,419.5 915.5,423 890.1,423" fill="#6d90c8" />
<rect x="927" y="409" width="22" height="14" fill="#4e72b0"/>
<polygon points="929,419 936,414.5 936,419" fill="#a6c2ec" />
<polygon points="927,419.5 949,419.5 949,423 927,423" fill="#6d90c8" />
<polygon points="845.6,423 960.3,423 958.3,468 947,524.3 859,524.3 847.6,468" fill="#e3ae99" />
<polygon points="862,468.5 943.9,468.5 938.9,505.7 866.9,505.7" fill="#375a96" />
<polygon points="862,468.5 943.9,468.5 942.1,482.2 863.8,482.2" fill="#46699f" />
<polygon points="862,468.5 868,468.5 877.7,505.7 870,505.7" fill="#2f4f88" />
<polygon points="866.9,505.7 876.6,505.7 866.2,496.4" fill="#1b1b1b" />
<polygon points="938.9,505.7 927.7,505.7 939.7,495.8" fill="#1b1b1b" />
<rect x="846.0" y="409.3" width="10.4" height="14" rx="5" fill="url(#cylR)"/>
<rect x="878.6999999999999" y="409.3" width="10.4" height="14" rx="5" fill="url(#cylR)"/>
<rect x="916.0" y="409.3" width="10.4" height="14" rx="5" fill="url(#cylR)"/>
<rect x="948.9" y="409.3" width="10.4" height="14" rx="5" fill="url(#cylR)"/>
<circle cx="978.4" cy="441" r="13.8" fill="none" stroke="#b87660" stroke-width="11.5"/>
<circle cx="978.4" cy="441" r="15.5" fill="none" stroke="#d89c84" stroke-width="4" opacity="0.8"/>
<circle cx="978.4" cy="441" r="19" fill="none" stroke="#8a5242" stroke-width="1.2"/>
<circle cx="978.4" cy="441" r="9.6" fill="none" stroke="#e8b8a0" stroke-width="2.2" opacity="0.7"/>
<circle cx="976.6" cy="441" r="8.1" fill="#1b1b1b"/>
<path d="M970.5 436 A8 8 0 0 1 974 433.5 L972 448 A8 8 0 0 1 969 443Z" fill="#4a72b8"/>
</g>
<line x1="844.8" y1="335.7" x2="844.8" y2="416" stroke="#dedede" stroke-width="1"/>
<line x1="960.2" y1="335.7" x2="960.2" y2="416" stroke="#dedede" stroke-width="1"/>
<line x1="844.8" y1="346.9" x2="960.2" y2="346.9" stroke="#e0e0e0" stroke-width="1"/>
<polygon points="844.8,346.9 865.8,341.4 865.8,352.4" fill="#ffffff" />
<polygon points="960.2,346.9 939.2,352.4 939.2,341.4" fill="#ffffff" />
<text x="872.5" y="342.3" font-family="Liberation Sans" font-size="31.5" fill="#ffffff" text-anchor="start">5.20</text>
<line x1="858" y1="530" x2="858" y2="591" stroke="#dedede" stroke-width="1"/>
<line x1="947" y1="530" x2="947" y2="591" stroke="#dedede" stroke-width="1"/>
<line x1="826" y1="580.7" x2="979.7" y2="580.7" stroke="#e0e0e0" stroke-width="1"/>
<polygon points="858,580.7 837,586.2 837,575.2" fill="#ffffff" />
<polygon points="947,580.7 968,575.2 968,586.2" fill="#ffffff" />
<text x="872.5" y="576" font-family="Liberation Sans" font-size="31.5" fill="#ffffff" text-anchor="start">3.95</text>
<g clip-path="url(#c_persp)">
<line x1="928.7" y1="121.5" x2="1297.5" y2="218" stroke="#8a3e3e" stroke-width="1.1"/>
<line x1="928.7" y1="121.5" x2="1039.4" y2="29.3" stroke="#3a8c3a" stroke-width="1"/>
<polygon points="886.2,144.4 992.4,175.2 996.6,170.3 891.3,140.3" fill="#884f3e" stroke="#884f3e" stroke-width="0.6" stroke-linejoin="round" />
<path d="M887.9 84.5 L887.8 82.4 L887.4 80.5 L886.7 78.9 L885.9 77.7 L884.9 76.9 L883.7 76.5 L882.4 76.7 L881.1 77.3 L879.8 78.4 L878.5 79.9 L877.4 81.7 L876.4 83.9 L875.6 86.2 L875 88.6 L874.7 91.1 L874.6 93.5 L874.8 95.6 L875.2 97.5 L875.9 99.1 L876.8 100.3 L877.9 101 L879 101.2 L880.3 101 L881.6 100.3 L882.9 99.2 L884.1 97.7 L885.2 95.9 L886.2 93.8 L886.9 91.5 L887.5 89.2 L887.9 86.8Z M884.4 86.9 L884.3 85.6 L883.9 84.6 L883.4 83.8 L882.8 83.4 L882 83.3 L881.3 83.7 L880.5 84.4 L879.7 85.4 L879.1 86.6 L878.7 88.1 L878.4 89.5 L878.3 91 L878.4 92.3 L878.8 93.3 L879.3 94.1 L879.9 94.5 L880.7 94.5 L881.5 94.1 L882.3 93.4 L883 92.4 L883.6 91.2 L884 89.8 L884.3 88.3Z" fill="#b46e56" fill-rule="evenodd"/>
<polygon points="826.6,111.1 851.7,118 895.5,87.8 871.8,82.1" fill="#b06a53" stroke="#b06a53" stroke-width="0.6" stroke-linejoin="round" />
<polygon points="836.5,169.2 860.1,176.8 851.7,118 826.6,111.1" fill="#a6634d" stroke="#a6634d" stroke-width="0.6" stroke-linejoin="round" />
<polygon points="860.1,176.8 891.4,150.9 895.5,87.8 851.7,118" fill="#b87560" stroke="#b87560" stroke-width="0.6" stroke-linejoin="round" />
<polygon points="887.9,90.6 889.3,89.4 889.9,88.2 889.9,86.9 889.2,85.7 887.8,84.6 885.9,83.6 883.5,82.9 880.8,82.4 877.8,82.2 874.8,82.2 871.8,82.5 869.1,83.1 866.7,83.9 864.7,84.9 863.3,86 862.5,87.3 862.5,88.5 863.1,89.8 864.4,90.9 866.3,91.9 868.7,92.7 871.5,93.2 874.5,93.5 877.7,93.4 880.8,93.1 883.6,92.5 886,91.6" fill="#5a84c4" />
<polygon points="886.4,88.8 887.5,87.8 888.1,86.7 888.1,85.6 887.5,84.6 886.3,83.6 884.6,82.8 882.5,82.2 880.2,81.7 877.6,81.5 874.9,81.6 872.3,81.8 869.9,82.3 867.8,83 866.1,83.9 864.9,84.9 864.3,85.9 864.2,87 864.8,88.1 865.9,89.1 867.5,90 869.6,90.6 872.1,91.1 874.7,91.3 877.5,91.3 880.1,91 882.6,90.5 884.7,89.7" fill="#77a0da" />
<polygon points="881.5,86.9 882.3,85 879.5,83.4 874.8,83.2 870.9,84.4 870,86.3 872.7,87.9 877.5,88.1" fill="#9ec2f0" />
<polygon points="874.2,100 875.6,98.7 876.4,97.4 876.4,96 875.7,94.8 874.4,93.6 872.4,92.6 870,91.8 867.2,91.3 864.2,91 861.1,91.1 858,91.4 855.1,92 852.6,92.9 850.5,93.9 849,95.1 848.2,96.4 848,97.8 848.6,99.1 849.9,100.3 851.8,101.4 854.2,102.2 857.1,102.8 860.3,103 863.5,103 866.7,102.6 869.6,102 872.2,101.1" fill="#5a84c4" />
<polygon points="872.6,98.2 873.9,97.1 874.5,95.9 874.5,94.8 873.9,93.6 872.8,92.6 871.1,91.7 869,91.1 866.5,90.6 863.9,90.4 861.2,90.4 858.5,90.7 856,91.2 853.8,92 852,92.9 850.7,94 850,95.1 849.8,96.3 850.3,97.4 851.5,98.5 853.1,99.4 855.2,100.1 857.7,100.6 860.5,100.8 863.3,100.8 866.1,100.4 868.6,99.9 870.8,99.1" fill="#77a0da" />
<polygon points="867.6,96.2 868.5,94.1 865.8,92.5 860.9,92.2 856.8,93.4 855.8,95.5 858.6,97.2 863.5,97.5" fill="#9ec2f0" />
<polygon points="859.6,110 861.1,108.6 862,107.2 862,105.8 861.4,104.4 860.1,103.2 858.1,102.1 855.7,101.3 852.8,100.7 849.7,100.5 846.5,100.5 843.3,100.8 840.3,101.5 837.6,102.4 835.5,103.5 833.9,104.8 832.9,106.2 832.7,107.6 833.2,109 834.5,110.3 836.4,111.5 838.9,112.4 841.8,113 845,113.2 848.4,113.2 851.7,112.8 854.8,112.1 857.5,111.2" fill="#5a84c4" />
<polygon points="857.9,108.1 859.3,106.9 860,105.7 860.1,104.5 859.5,103.3 858.4,102.2 856.7,101.3 854.5,100.5 852,100.1 849.3,99.8 846.5,99.9 843.7,100.2 841.1,100.7 838.8,101.5 836.9,102.5 835.5,103.6 834.7,104.8 834.5,106.1 835,107.3 836.1,108.4 837.8,109.4 839.9,110.1 842.5,110.7 845.3,110.9 848.2,110.9 851.1,110.5 853.7,109.9 856.1,109.1" fill="#77a0da" />
<polygon points="852.9,106 853.9,103.8 851.1,102.1 846.1,101.8 841.8,103.1 840.7,105.3 843.4,107.1 848.5,107.4" fill="#9ec2f0" />
<rect x="868.9" y="78.5" width="8" height="5.6" fill="#a8644e"/>
<circle cx="872.9" cy="78.5" r="4.1" fill="url(#prongP)"/>
<rect x="886" y="82.5" width="8" height="5.6" fill="#a8644e"/>
<circle cx="890" cy="82.5" r="4.1" fill="url(#prongP)"/>
<rect x="857.9" y="86.9" width="8" height="5.7" fill="#a8644e"/>
<circle cx="861.9" cy="86.9" r="4.1" fill="url(#prongP)"/>
<rect x="872.4" y="90.5" width="8" height="5.7" fill="#a8644e"/>
<circle cx="876.4" cy="90.5" r="4.1" fill="url(#prongP)"/>
<rect x="843.5" y="96.1" width="8" height="5.8" fill="#a8644e"/>
<circle cx="847.5" cy="96.1" r="4.1" fill="url(#prongP)"/>
<rect x="858.2" y="99.9" width="8" height="5.9" fill="#a8644e"/>
<circle cx="862.2" cy="99.9" r="4.1" fill="url(#prongP)"/>
<rect x="827.6" y="104.7" width="8" height="5.9" fill="#a8644e"/>
<circle cx="831.6" cy="104.7" r="4.1" fill="url(#prongP)"/>
<rect x="845.6" y="109.5" width="8" height="6" fill="#a8644e"/>
<circle cx="849.6" cy="109.5" r="4.1" fill="url(#prongP)"/>
<polygon points="864.5,116.2 952.3,140 952.1,128.7 874.3,108.3" fill="#6a8fcc" stroke="#6a8fcc" stroke-width="0.6" stroke-linejoin="round" />
<polygon points="952.3,140 965.1,138 961.7,127.3 952.1,128.7" fill="#5278ba" stroke="#5278ba" stroke-width="0.6" stroke-linejoin="round" />
<polygon points="965.1,138 995.1,109.1 985.6,105.1 961.7,127.3" fill="#4870b2" stroke="#4870b2" stroke-width="0.6" stroke-linejoin="round" />
<polygon points="995.1,109.1 990.9,103.8 982.6,101.1 985.6,105.1" fill="#3f64a4" stroke="#3f64a4" stroke-width="0.6" stroke-linejoin="round" />
<polygon points="898.3,85.9 862.6,110.6 872.7,104.2 900.6,84.9" fill="#3a5e9e" stroke="#3a5e9e" stroke-width="0.6" stroke-linejoin="round" />
<polygon points="862.6,110.6 864.5,116.2 874.3,108.3 872.7,104.2" fill="#5a80c2" stroke="#5a80c2" stroke-width="0.6" stroke-linejoin="round" />
<polygon points="854.7,128.7 952.8,156.6 952.3,140 864.5,116.2" fill="#5a80c0" stroke="#5a80c0" stroke-width="0.6" stroke-linejoin="round" />
<polygon points="952.8,156.6 968.8,154.1 965.1,138 952.3,140" fill="#4d74b6" stroke="#4d74b6" stroke-width="0.6" stroke-linejoin="round" />
<polygon points="968.8,154.1 1004.3,117.9 995.1,109.1 965.1,138" fill="#446bac" stroke="#446bac" stroke-width="0.6" stroke-linejoin="round" />
<polygon points="1004.3,117.9 999,111.3 990.9,103.8 995.1,109.1" fill="#3b60a0" stroke="#3b60a0" stroke-width="0.6" stroke-linejoin="round" />
<polygon points="852.3,121.6 854.7,128.7 864.5,116.2 862.6,110.6" fill="#537abc" stroke="#537abc" stroke-width="0.6" stroke-linejoin="round" />
<polygon points="854.9,133 952.6,161.1 952.8,156.6 854.7,128.7" fill="#3d5f9c" stroke="#3d5f9c" stroke-width="0.6" stroke-linejoin="round" />
<polygon points="952.6,161.1 968.6,158.6 968.8,154.1 952.8,156.6" fill="#3a5b96" stroke="#3a5b96" stroke-width="0.6" stroke-linejoin="round" />
<polygon points="968.6,158.6 1003.9,122.1 1004.3,117.9 968.8,154.1" fill="#365690" stroke="#365690" stroke-width="0.6" stroke-linejoin="round" />
<polygon points="852.5,125.8 854.9,133 854.7,128.7 852.3,121.6" fill="#3a5b98" stroke="#3a5b98" stroke-width="0.6" stroke-linejoin="round" />
<polygon points="859.7,145.9 953.2,173.7 952.6,161.1 854.9,133" fill="#34558f" stroke="#34558f" stroke-width="0.6" stroke-linejoin="round" />
<polygon points="953.2,173.7 967.3,171.7 968.6,158.6 952.6,161.1" fill="#31518a" stroke="#31518a" stroke-width="0.6" stroke-linejoin="round" />
<polygon points="967.3,171.7 999.3,137.6 1003.9,122.1 968.6,158.6" fill="#2f4e86" stroke="#2f4e86" stroke-width="0.6" stroke-linejoin="round" />
<polygon points="857,139.4 859.7,145.9 854.9,133 852.5,125.8" fill="#32528c" stroke="#32528c" stroke-width="0.6" stroke-linejoin="round" />
<polygon points="872.3,159 952,183.3 953.2,173.7 859.7,145.9" fill="#2f4f88" stroke="#2f4f88" stroke-width="0.6" stroke-linejoin="round" />
<polygon points="952,183.3 963.3,181.7 967.3,171.7 953.2,173.7" fill="#2d4a82" stroke="#2d4a82" stroke-width="0.6" stroke-linejoin="round" />
<polygon points="963.3,181.7 986.5,156.6 999.3,137.6 967.3,171.7" fill="#2b4880" stroke="#2b4880" stroke-width="0.6" stroke-linejoin="round" />
<polygon points="893,167.8 947,184.4 952,183.3 872.3,159" fill="#2c4a80" stroke="#2c4a80" stroke-width="0.6" stroke-linejoin="round" />
<polygon points="947,184.4 954.3,183.6 963.3,181.7 952,183.3" fill="#2a467c" stroke="#2a467c" stroke-width="0.6" stroke-linejoin="round" />
<polygon points="874.3,108.3 952.1,128.7 961.7,127.3 985.6,105.1 982.6,101.1 909.1,83.8 900.6,84.9 872.7,104.2" fill="#2e4f8a" stroke="#2e4f8a" stroke-width="0.6" stroke-linejoin="round" />
<polygon points="849.5,150.5 964.3,185.4 965,172.7 848.9,138.6" fill="#a2604a" stroke="#a2604a" stroke-width="0.6" stroke-linejoin="round" />
<polygon points="859.7,165.8 970.5,200.6 974.2,196.3 864.1,162.2" fill="#a2604a" stroke="#a2604a" stroke-width="0.6" stroke-linejoin="round" />
<polygon points="860.1,176.8 969.7,212.3 970.5,200.6 859.7,165.8" fill="#a2604a" stroke="#a2604a" stroke-width="0.6" stroke-linejoin="round" />
<path d="M1034.1 119.6 L1034.3 117.3 L1034.3 115.3 L1034.1 113.6 L1033.7 112.4 L1033.2 111.6 L1032.4 111.4 L1031.6 111.7 L1030.6 112.5 L1029.6 113.8 L1028.6 115.6 L1027.6 117.8 L1026.6 120.2 L1025.8 122.8 L1025.1 125.6 L1024.5 128.3 L1024.2 130.9 L1024 133.2 L1024 135.3 L1024.3 136.9 L1024.7 138 L1025.3 138.7 L1026 138.8 L1026.9 138.4 L1027.8 137.5 L1028.8 136.2 L1029.8 134.4 L1030.8 132.3 L1031.7 129.9 L1032.5 127.4 L1033.2 124.7 L1033.8 122.1Z M1031.5 122.6 L1031.6 121.2 L1031.5 120.1 L1031.3 119.3 L1030.9 118.9 L1030.4 119 L1029.9 119.4 L1029.3 120.3 L1028.6 121.5 L1028.1 122.9 L1027.6 124.5 L1027.2 126.2 L1026.9 127.7 L1026.9 129.1 L1026.9 130.2 L1027.2 131 L1027.5 131.4 L1028 131.3 L1028.6 130.8 L1029.2 129.9 L1029.8 128.8 L1030.4 127.3 L1030.9 125.8 L1031.2 124.2Z" fill="#8e5442" fill-rule="evenodd"/>
<path d="M1038.7 120.7 L1038.9 118.4 L1038.9 116.4 L1038.7 114.7 L1038.3 113.5 L1037.8 112.7 L1037.1 112.5 L1036.2 112.8 L1035.3 113.6 L1034.3 114.9 L1033.3 116.7 L1032.3 118.9 L1031.3 121.3 L1030.5 124 L1029.7 126.7 L1029.2 129.5 L1028.8 132 L1028.6 134.4 L1028.6 136.4 L1028.9 138 L1029.3 139.2 L1029.9 139.8 L1030.6 140 L1031.4 139.6 L1032.4 138.7 L1033.3 137.3 L1034.3 135.5 L1035.3 133.4 L1036.2 131 L1037 128.5 L1037.7 125.8 L1038.3 123.2Z M1036 123.7 L1036.1 122.3 L1036.1 121.2 L1035.9 120.4 L1035.5 120.1 L1035 120.1 L1034.5 120.6 L1033.9 121.4 L1033.3 122.6 L1032.7 124.1 L1032.2 125.7 L1031.8 127.3 L1031.6 128.9 L1031.5 130.3 L1031.5 131.4 L1031.7 132.1 L1032.1 132.5 L1032.6 132.4 L1033.1 131.9 L1033.7 131.1 L1034.3 129.9 L1034.9 128.5 L1035.4 126.9 L1035.8 125.3Z" fill="#a0604a" fill-rule="evenodd"/>
<path d="M1042.4 121.6 L1042.7 119.3 L1042.7 117.3 L1042.5 115.6 L1042.1 114.4 L1041.6 113.6 L1040.9 113.4 L1040.1 113.7 L1039.2 114.5 L1038.2 115.9 L1037.2 117.6 L1036.2 119.8 L1035.2 122.3 L1034.4 124.9 L1033.6 127.7 L1033.1 130.4 L1032.7 133 L1032.5 135.4 L1032.5 137.4 L1032.7 139 L1033.1 140.2 L1033.7 140.8 L1034.4 140.9 L1035.2 140.5 L1036.2 139.6 L1037.1 138.3 L1038.1 136.5 L1039.1 134.4 L1040 132 L1040.8 129.4 L1041.5 126.8 L1042.1 124.1Z M1039.8 124.6 L1040 123.3 L1039.9 122.1 L1039.7 121.4 L1039.4 121 L1038.9 121 L1038.3 121.5 L1037.7 122.3 L1037.1 123.5 L1036.6 125 L1036.1 126.6 L1035.7 128.3 L1035.4 129.8 L1035.3 131.2 L1035.4 132.3 L1035.6 133.1 L1035.9 133.5 L1036.4 133.4 L1037 132.9 L1037.6 132 L1038.2 130.8 L1038.7 129.4 L1039.2 127.8 L1039.6 126.2Z" fill="#bc7a62" fill-rule="evenodd"/>
<polygon points="969.2,150.5 1001.1,159.2 1034.4,121.3 1005.1,114.3" fill="#b06a53" stroke="#b06a53" stroke-width="0.6" stroke-linejoin="round" />
<polygon points="969.7,212.3 999.1,221.8 1001.1,159.2 969.2,150.5" fill="#a6634d" stroke="#a6634d" stroke-width="0.6" stroke-linejoin="round" />
<polygon points="999.1,221.8 1023.4,189.7 1034.4,121.3 1001.1,159.2" fill="#a0604b" stroke="#a0604b" stroke-width="0.6" stroke-linejoin="round" />
<polygon points="1003.6,183 1009.9,177.3 1021.8,183.5 1003,205.7" fill="#7c4434" />
<polygon points="1003.3,193 1016.5,189.8 1003,205.7" fill="#8a4d3c" />
<polygon points="1028.8,125.1 1029.6,123.6 1029.7,122.1 1029,120.5 1027.6,119 1025.5,117.6 1022.8,116.5 1019.8,115.6 1016.5,114.9 1013.1,114.7 1009.8,114.7 1006.6,115.1 1003.8,115.8 1001.6,116.8 999.9,118 998.9,119.4 998.7,121 999.3,122.5 1000.6,124.1 1002.6,125.5 1005.3,126.7 1008.4,127.7 1011.8,128.4 1015.3,128.7 1018.8,128.6 1022.1,128.2 1024.9,127.4 1027.2,126.4" fill="#5a84c4" />
<polygon points="1027,123.1 1027.8,121.9 1027.8,120.5 1027.2,119.2 1026,117.8 1024.2,116.7 1021.9,115.6 1019.2,114.9 1016.4,114.3 1013.4,114.1 1010.5,114.1 1007.7,114.5 1005.3,115.1 1003.3,115.9 1001.9,117 1001.1,118.2 1000.9,119.6 1001.4,120.9 1002.5,122.3 1004.3,123.5 1006.6,124.5 1009.3,125.4 1012.3,126 1015.3,126.2 1018.4,126.2 1021.2,125.8 1023.7,125.2 1025.6,124.2" fill="#77a0da" />
<polygon points="1021.1,120.9 1020.9,118.5 1017,116.6 1011.6,116.2 1007.8,117.7 1007.9,120.1 1011.8,122.1 1017.3,122.4" fill="#9ec2f0" />
<polygon points="1018.4,136.8 1019.3,135.3 1019.4,133.6 1018.8,131.9 1017.3,130.3 1015.2,128.8 1012.5,127.6 1009.4,126.6 1006,126 1002.5,125.7 999,125.7 995.8,126.1 992.9,126.9 990.5,127.9 988.7,129.3 987.7,130.8 987.4,132.4 988,134.1 989.3,135.7 991.3,137.3 994,138.6 997.2,139.6 1000.7,140.3 1004.3,140.7 1008,140.6 1011.3,140.2 1014.3,139.4 1016.7,138.2" fill="#5a84c4" />
<polygon points="1016.6,134.8 1017.4,133.4 1017.5,132 1016.9,130.5 1015.7,129.1 1013.8,127.9 1011.5,126.8 1008.8,125.9 1005.8,125.4 1002.7,125.1 999.7,125.1 996.9,125.5 994.4,126.2 992.3,127.1 990.8,128.2 989.8,129.5 989.6,131 990.1,132.4 991.2,133.9 993,135.2 995.4,136.3 998.1,137.2 1001.2,137.8 1004.4,138.1 1007.5,138.1 1010.4,137.7 1013,137 1015.1,136" fill="#77a0da" />
<polygon points="1010.4,132.4 1010.4,129.8 1006.4,127.8 1000.8,127.4 996.9,129 996.8,131.6 1000.8,133.7 1006.5,134.1" fill="#9ec2f0" />
<polygon points="1007.2,149.4 1008.2,147.7 1008.4,145.9 1007.8,144.1 1006.3,142.4 1004.2,140.8 1001.5,139.5 998.3,138.5 994.8,137.8 991.2,137.4 987.6,137.5 984.2,137.9 981.2,138.7 978.7,139.9 976.8,141.3 975.6,142.9 975.3,144.7 975.8,146.5 977.1,148.3 979.1,149.9 981.9,151.3 985.1,152.4 988.7,153.2 992.5,153.5 996.3,153.5 999.8,153 1002.9,152.1 1005.4,150.9" fill="#5a84c4" />
<polygon points="1005.3,147.3 1006.2,145.8 1006.4,144.3 1005.8,142.7 1004.6,141.2 1002.7,139.9 1000.4,138.7 997.6,137.8 994.5,137.2 991.4,136.9 988.2,136.9 985.3,137.3 982.6,138 980.5,139 978.8,140.3 977.8,141.7 977.6,143.2 978,144.8 979.1,146.3 980.9,147.7 983.3,148.9 986.1,149.9 989.3,150.6 992.6,150.9 995.8,150.8 998.9,150.4 1001.6,149.6 1003.8,148.6" fill="#77a0da" />
<polygon points="999,144.8 999,142 995,139.8 989.2,139.4 985.1,141.1 984.9,143.9 989,146.2 994.8,146.5" fill="#9ec2f0" />
<rect x="1004" y="110.6" width="8" height="6" fill="#a8644e"/>
<circle cx="1008" cy="110.6" r="4.1" fill="url(#prongP)"/>
<rect x="1025.2" y="115.7" width="8" height="6.1" fill="#a8644e"/>
<circle cx="1029.2" cy="115.7" r="4.1" fill="url(#prongP)"/>
<rect x="996.2" y="121.1" width="8" height="6.1" fill="#a8644e"/>
<circle cx="1000.2" cy="121.1" r="4.1" fill="url(#prongP)"/>
<rect x="1014.2" y="125.5" width="8" height="6.2" fill="#a8644e"/>
<circle cx="1018.2" cy="125.5" r="4.1" fill="url(#prongP)"/>
<rect x="984.9" y="132.6" width="8" height="6.3" fill="#a8644e"/>
<circle cx="988.9" cy="132.6" r="4.1" fill="url(#prongP)"/>
<rect x="1003.4" y="137.3" width="8" height="6.4" fill="#a8644e"/>
<circle cx="1007.4" cy="137.3" r="4.1" fill="url(#prongP)"/>
<rect x="971.5" y="143.4" width="8" height="6.4" fill="#a8644e"/>
<circle cx="975.5" cy="143.4" r="4.1" fill="url(#prongP)"/>
<rect x="994.3" y="149.5" width="8" height="6.5" fill="#a8644e"/>
<circle cx="998.3" cy="149.5" r="4.1" fill="url(#prongP)"/>
<line x1="873.9" y1="85.8" x2="909.1" y2="62.8" stroke="#dcdcdc" stroke-width="1"/>
<line x1="1035.2" y1="125.1" x2="1060.6" y2="95.9" stroke="#dcdcdc" stroke-width="1"/>
<line x1="905.8" y1="65" x2="1058.2" y2="98.6" stroke="#dcdcdc" stroke-width="1"/>
<polygon points="905.8,65 919.2,66.4 915.8,68.7" fill="#ffffff" />
<polygon points="1058.2,98.6 1045,94.1 1042.4,96.8" fill="#ffffff" />
<text x="0" y="0" font-family="Liberation Sans" font-size="14.4" fill="#ffffff" transform="matrix(1.2874 0.2797 -0.5748 0.4801 956.48 74.71)">11.69</text>
<line x1="897.4" y1="91.5" x2="921.1" y2="74.9" stroke="#dcdcdc" stroke-width="1"/>
<line x1="877.6" y1="67.9" x2="977.1" y2="90.7" stroke="#dcdcdc" stroke-width="1"/>
<polygon points="895.1,71.9 885.2,68.1 881.6,70.4" fill="#ffffff" />
<polygon points="917.9,77.2 931.9,78.8 928.6,81.2" fill="#ffffff" />
<text x="0" y="0" font-family="Liberation Sans" font-size="14.4" fill="#ffffff" transform="matrix(1.2917 0.2905 -0.6204 0.4985 941.14 81.18)">1.90</text>
<line x1="801.6" y1="69.8" x2="869" y2="86.3" stroke="#dcdcdc" stroke-width="1"/>
<line x1="752.9" y1="95.6" x2="823.8" y2="115.5" stroke="#dcdcdc" stroke-width="1"/>
<line x1="806.8" y1="71.1" x2="758.4" y2="97.2" stroke="#dcdcdc" stroke-width="1"/>
<polygon points="806.8,71.1 800.9,76.4 795.4,75" fill="#ffffff" />
<polygon points="758.4,97.2 771.2,92.6 765.5,91" fill="#ffffff" />
<text x="0" y="0" font-family="Liberation Sans" font-size="14.4" fill="#ffffff" transform="matrix(0.9306 -0.4992 1.1119 0.2908 774.60 91.41)">5.20</text>
<line x1="807.3" y1="100.9" x2="832.2" y2="107.7" stroke="#dcdcdc" stroke-width="1"/>
<line x1="786.5" y1="111.5" x2="833.4" y2="124.9" stroke="#dcdcdc" stroke-width="1"/>
<line x1="787.7" y1="122.8" x2="859.1" y2="143.9" stroke="#dcdcdc" stroke-width="1"/>
<line x1="785" y1="46.7" x2="794.9" y2="143.8" stroke="#dcdcdc" stroke-width="1"/>
<polygon points="791.8,113 793.4,100.2 787.4,98.5" fill="#ffffff" />
<polygon points="792.9,124.3 797.2,138.3 791.4,136.5" fill="#ffffff" />
<text x="0" y="0" font-family="Liberation Sans" font-size="14.4" fill="#ffffff" transform="matrix(-0.1578 -1.4520 1.2038 0.2970 787.04 87.47)">0.84</text>
<line x1="765.3" y1="136.6" x2="856" y2="165.1" stroke="#dcdcdc" stroke-width="1"/>
<line x1="766.6" y1="147.1" x2="836.3" y2="169.6" stroke="#dcdcdc" stroke-width="1"/>
<line x1="762.9" y1="76.4" x2="774.2" y2="167.6" stroke="#dcdcdc" stroke-width="1"/>
<polygon points="770.5,138.2 771.8,126.4 766.2,124.7" fill="#ffffff" />
<polygon points="771.8,148.8 776,161.8 770.6,160" fill="#ffffff" />
<text x="0" y="0" font-family="Liberation Sans" font-size="14.4" fill="#ffffff" transform="matrix(-0.1742 -1.3409 1.1188 0.3114 765.93 115.17)">0.86</text>
<line x1="1005.1" y1="154.5" x2="1136.9" y2="190.3" stroke="#dcdcdc" stroke-width="1"/>
<line x1="1011.8" y1="137.2" x2="1083.3" y2="155.6" stroke="#dcdcdc" stroke-width="1"/>
<line x1="1003" y1="223" x2="1121" y2="261.2" stroke="#dcdcdc" stroke-width="1"/>
<line x1="1131.9" y1="163.1" x2="1106.9" y2="280.7" stroke="#dcdcdc" stroke-width="1"/>
<polygon points="1126.7,187.5 1135.5,172 1125.2,169.3" fill="#ffffff" />
<polygon points="1111.7,258.2 1113.2,273.9 1104.1,270.9" fill="#ffffff" />
<text x="0" y="0" font-family="Liberation Sans" font-size="14.4" fill="#ffffff" transform="matrix(0.3073 -1.5386 1.9065 0.5687 1111.42 244.85)">4.59</text>
<line x1="973.7" y1="193.7" x2="970.3" y2="244.9" stroke="#dcdcdc" stroke-width="1"/>
<line x1="980.6" y1="195.8" x2="976.8" y2="247.1" stroke="#dcdcdc" stroke-width="1"/>
<line x1="949.2" y1="231" x2="1047" y2="264.6" stroke="#dcdcdc" stroke-width="1"/>
<polygon points="970.8,238.4 956.3,230.2 955.9,236.6" fill="#ffffff" />
<polygon points="977.3,240.7 992.8,242.6 992.2,249.1" fill="#ffffff" />
<text x="0" y="0" font-family="Liberation Sans" font-size="14.4" fill="#ffffff" transform="matrix(1.6261 0.5451 -0.1663 1.3543 1001.84 245.58)">0.41</text>
<line x1="836.4" y1="172.9" x2="838.9" y2="212.2" stroke="#dcdcdc" stroke-width="1"/>
<line x1="860.2" y1="180.7" x2="861.9" y2="220.5" stroke="#dcdcdc" stroke-width="1"/>
<line x1="820.9" y1="199.7" x2="921.2" y2="235.3" stroke="#dcdcdc" stroke-width="1"/>
<polygon points="838.5,206 826.6,198.9 827.1,204.8" fill="#ffffff" />
<polygon points="861.6,214.2 873.9,215.5 874.1,221.6" fill="#ffffff" />
<text x="0" y="0" font-family="Liberation Sans" font-size="14.4" fill="#ffffff" transform="matrix(1.3236 0.4589 0.0042 1.2472 883.05 218.87)">1.90</text>
<line x1="1007" y1="93.1" x2="1001.5" y2="154" stroke="#dcdcdc" stroke-width="1"/>
<line x1="1041.5" y1="60.3" x2="1035" y2="116.5" stroke="#dcdcdc" stroke-width="1"/>
<line x1="1006.2" y1="101.8" x2="1040.6" y2="68.3" stroke="#dcdcdc" stroke-width="1"/>
<polygon points="1006.2,101.8 1013.9,90.4 1013.1,99" fill="#ffffff" />
<polygon points="1040.6,68.3 1035.1,70 1034.1,78.2" fill="#ffffff" />
<text x="0" y="0" font-family="Liberation Sans" font-size="14.4" fill="#ffffff" transform="matrix(0.6646 -0.6228 -0.1796 1.7241 1015.15 89.44)">5.20</text>
<line x1="998.8" y1="225.6" x2="995.4" y2="261.3" stroke="#dcdcdc" stroke-width="1"/>
<line x1="1023" y1="193.3" x2="1019.1" y2="227.5" stroke="#dcdcdc" stroke-width="1"/>
<line x1="986.5" y1="268.3" x2="1028.1" y2="209.6" stroke="#dcdcdc" stroke-width="1"/>
<polygon points="996,254.9 989.7,261 989.1,267.5" fill="#ffffff" />
<polygon points="1019.8,221.3 1025.7,210.5 1024.9,216.6" fill="#ffffff" />
<text x="0" y="0" font-family="Liberation Sans" font-size="14.4" fill="#ffffff" transform="matrix(0.6057 -0.8404 -0.1341 1.2870 999.84 247.42)">3.95</text>
</g>
<rect x="609" y="2" width="1" height="604" fill="#2e2e2e"/>
<rect x="4" y="303" width="1196" height="1" fill="#2e2e2e"/>
<rect x="4" y="2" width="25" height="9.8" fill="#8c8cf0"/>
<text x="7.8" y="9.4" font-family="Liberation Sans" font-size="7" font-weight="bold" fill="#1c1c4a" textLength="11.5" lengthAdjust="spacingAndGlyphs">Top</text>
<rect x="22.9" y="3.3" width="0.9" height="7.3" fill="#1c1c4a"/>
<path d="M24.7 6h3l-1.5 1.8z" fill="#1c1c4a"/>
<rect x="610" y="2" width="48" height="9.8" fill="#c6c6e2"/>
<text x="613.6" y="9.4" font-family="Liberation Sans" font-size="7" font-weight="bold" fill="#40404e" textLength="34.6" lengthAdjust="spacingAndGlyphs">Perspective</text>
<rect x="651.9" y="3.3" width="0.9" height="7.3" fill="#40404e"/>
<path d="M653.6999999999999 6h3l-1.5 1.8z" fill="#40404e"/>
<rect x="4" y="305" width="29.5" height="9.8" fill="#c6c6e2"/>
<text x="8.1" y="312.4" font-family="Liberation Sans" font-size="7" font-weight="bold" fill="#40404e" textLength="15" lengthAdjust="spacingAndGlyphs">Front</text>
<rect x="27" y="306.3" width="0.9" height="7.3" fill="#40404e"/>
<path d="M28.8 309h3l-1.5 1.8z" fill="#40404e"/>
<rect x="610" y="305" width="28.8" height="9.8" fill="#c6c6e2"/>
<text x="614" y="312.4" font-family="Liberation Sans" font-size="7" font-weight="bold" fill="#40404e" textLength="14.7" lengthAdjust="spacingAndGlyphs">Right</text>
<rect x="632.9" y="306.3" width="0.9" height="7.3" fill="#40404e"/>
<path d="M634.6999999999999 309h3l-1.5 1.8z" fill="#40404e"/>
<path d="M23.5 268V283H38.5" stroke="#6a6a6a" stroke-width="1" fill="none"/>
<text x="24.5" y="269" font-family="Liberation Sans" font-size="6" fill="#6a6a6a">y</text>
<text x="39.5" y="285" font-family="Liberation Sans" font-size="6" fill="#6a6a6a">x</text>
<path d="M23.5 568V587H39.5" stroke="#6a6a6a" stroke-width="1" fill="none"/>
<text x="24.5" y="569" font-family="Liberation Sans" font-size="6" fill="#6a6a6a">z</text>
<text x="40.5" y="589" font-family="Liberation Sans" font-size="6" fill="#6a6a6a">x</text>
<path d="M629.2 570.4V586.4H645.2" stroke="#6a6a6a" stroke-width="1" fill="none"/>
<text x="630.2" y="571.4" font-family="Liberation Sans" font-size="6" fill="#6a6a6a">z</text>
<text x="646.2" y="588.4" font-family="Liberation Sans" font-size="6" fill="#6a6a6a">y</text>
<path d="M629.1 269.3V283.6L644.3 287.8M629.1 283.6L638.4 276.9" stroke="#6a6a6a" stroke-width="1" fill="none"/>
<text x="631" y="271" font-family="Liberation Sans" font-size="6" fill="#6a6a6a">z</text>
<text x="639.5" y="278" font-family="Liberation Sans" font-size="6" fill="#6a6a6a">y</text>
<text x="645" y="290" font-family="Liberation Sans" font-size="6" fill="#6a6a6a">x</text>
<rect x="0" y="606" width="1200" height="10" fill="#2e2e2e"/>
<text x="8.7" y="614" font-family="Liberation Sans" font-size="6.4" fill="#141414" stroke="#141414" stroke-width="0.2">Perspective</text>
<text x="48.2" y="614" font-family="Liberation Sans" font-size="6.4" fill="#141414" stroke="#141414" stroke-width="0.2">Top</text>
<text x="66" y="614" font-family="Liberation Sans" font-size="6.4" fill="#141414" stroke="#141414" stroke-width="0.2">Front</text>
<text x="90" y="614" font-family="Liberation Sans" font-size="6.4" fill="#141414" stroke="#141414" stroke-width="0.2">Right</text>
<path d="M112 611.5h5M114.5 609v5" stroke="#e8e8e8" stroke-width="1.3"/></svg></body></html>
